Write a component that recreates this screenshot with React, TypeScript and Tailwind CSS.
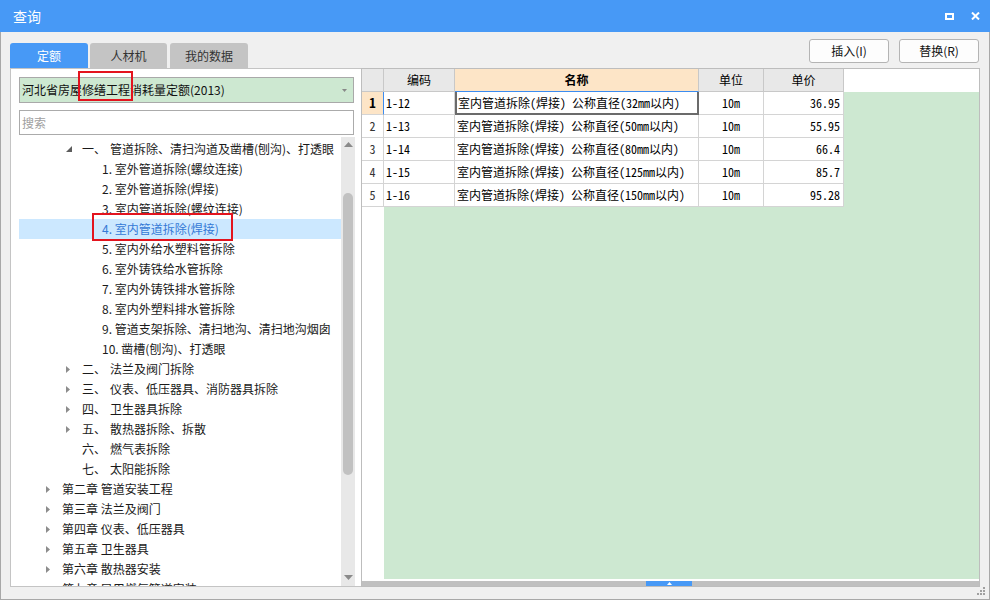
import React from "react";

type TreeRow = {
  kind: "chapter" | "section" | "item";
  arrow?: "right" | "down" | "none";
  num?: string;
  text: string;
  selected?: boolean;
};

const tree: TreeRow[] = [
  { kind: "section", arrow: "down", num: "一、", text: "管道拆除、清扫沟道及凿槽(刨沟)、打透眼" },
  { kind: "item", text: "1. 室外管道拆除(螺纹连接)" },
  { kind: "item", text: "2. 室外管道拆除(焊接)" },
  { kind: "item", text: "3. 室内管道拆除(螺纹连接)" },
  { kind: "item", text: "4. 室内管道拆除(焊接)", selected: true },
  { kind: "item", text: "5. 室内外给水塑料管拆除" },
  { kind: "item", text: "6. 室外铸铁给水管拆除" },
  { kind: "item", text: "7. 室内外铸铁排水管拆除" },
  { kind: "item", text: "8. 室内外塑料排水管拆除" },
  { kind: "item", text: "9. 管道支架拆除、清扫地沟、清扫地沟烟囱" },
  { kind: "item", text: "10. 凿槽(刨沟)、打透眼" },
  { kind: "section", arrow: "right", num: "二、", text: "法兰及阀门拆除" },
  { kind: "section", arrow: "right", num: "三、", text: "仪表、低压器具、消防器具拆除" },
  { kind: "section", arrow: "right", num: "四、", text: "卫生器具拆除" },
  { kind: "section", arrow: "right", num: "五、", text: "散热器拆除、拆散" },
  { kind: "section", arrow: "none", num: "六、", text: "燃气表拆除" },
  { kind: "section", arrow: "none", num: "七、", text: "太阳能拆除" },
  { kind: "chapter", arrow: "right", text: "第二章 管道安装工程" },
  { kind: "chapter", arrow: "right", text: "第三章 法兰及阀门" },
  { kind: "chapter", arrow: "right", text: "第四章 仪表、低压器具" },
  { kind: "chapter", arrow: "right", text: "第五章 卫生器具" },
  { kind: "chapter", arrow: "right", text: "第六章 散热器安装" },
  { kind: "chapter", arrow: "right", text: "第七章 民用燃气管道安装" },
];

const rows = [
  ["1-12", "室内管道拆除(焊接) 公称直径(32mm以内)", "10m", "36.95"],
  ["1-13", "室内管道拆除(焊接) 公称直径(50mm以内)", "10m", "55.95"],
  ["1-14", "室内管道拆除(焊接) 公称直径(80mm以内)", "10m", "66.4"],
  ["1-15", "室内管道拆除(焊接) 公称直径(125mm以内)", "10m", "85.7"],
  ["1-16", "室内管道拆除(焊接) 公称直径(150mm以内)", "10m", "95.28"],
];

function RightArrow() {
  return (
    <svg width="4" height="7" viewBox="0 0 4 7" className="shrink-0">
      <polygon points="0,0 4,3.5 0,7" fill="#8c8c8c" />
    </svg>
  );
}

function DownArrow() {
  return (
    <svg width="6" height="6" viewBox="0 0 6 6" className="shrink-0">
      <polygon points="6,0 6,6 0,6" fill="#5c5c5c" />
    </svg>
  );
}

function TreeLine({ r }: { r: TreeRow }) {
  const base = "h-[20px] flex items-center whitespace-nowrap text-[12px] leading-[20px]";
  const color = r.selected ? "bg-[#cce8ff] text-[#3479d6]" : "text-[#1a1a1a]";
  if (r.kind === "chapter") {
    return (
      <div className={`${base} ${color} pl-[27px]`}>
        <RightArrow />
        <span className="ml-[12px]">{r.text}</span>
      </div>
    );
  }
  if (r.kind === "section") {
    return (
      <div className={`${base} ${color} pl-[47px]`}>
        {r.arrow === "down" ? (
          <div className="w-[6px] flex items-center">
            <DownArrow />
          </div>
        ) : r.arrow === "right" ? (
          <div className="w-[6px] flex items-center">
            <RightArrow />
          </div>
        ) : (
          <div className="w-[6px]" />
        )}
        <span className="ml-[10px] w-[28px] shrink-0">{r.num}</span>
        <span>{r.text}</span>
      </div>
    );
  }
  return (
    <div className={`${base} ${color} pl-[83px]`}>
      <span>{r.text}</span>
    </div>
  );
}

export default function App() {
  const mono = "font-['Noto_Sans_Mono_CJK_SC','Noto_Sans_CJK_SC',monospace]";
  return (
    <div className="relative w-[990px] h-[600px] bg-[#f0f0f0] flex flex-col font-['Noto_Sans_CJK_SC','Noto_Sans',sans-serif] overflow-hidden">
      {/* Title bar */}
      <div className="h-[32px] bg-[#4799f6] flex items-center justify-between pl-[13px] pr-[10px] shrink-0">
        <span className="text-white text-[14px] leading-none">查询</span>
        <div className="flex items-center gap-[17px]">
          <div className="w-[9px] h-[7px] border-2 border-white" />
          <svg width="9" height="8" viewBox="0 0 9 8">
            <path d="M1 0.5 L8 7.5 M8 0.5 L1 7.5" stroke="white" strokeWidth="2" />
          </svg>
        </div>
      </div>

      {/* Body */}
      <div className="flex-1 flex flex-col border-x border-b border-[#a8a8a8] px-[9px]">
        {/* Tabs + buttons */}
        <div className="h-[36px] flex justify-between shrink-0">
          <div className="flex items-end text-[12px]">
            <div className="w-[78px] h-[25px] rounded-t-[3px] bg-[#4799f6] text-white flex items-center justify-center">定额</div>
            <div className="ml-[2px] w-[77px] h-[25px] rounded-t-[3px] bg-[#c4c4c4] text-[#333] flex items-center justify-center">人材机</div>
            <div className="ml-[3px] w-[78px] h-[25px] rounded-t-[3px] bg-[#c4c4c4] text-[#333] flex items-center justify-center">我的数据</div>
          </div>
          <div className="flex items-start pt-[7px] gap-[10px] pr-[1px] text-[12px]">
            <button className="w-[80px] h-[24px] bg-[#fdfdfd] border border-[#b4b4b4] rounded-[3px] text-[#111]">插入(I)</button>
            <button className="w-[80px] h-[24px] bg-[#fdfdfd] border border-[#b4b4b4] rounded-[3px] text-[#111]">替换(R)</button>
          </div>
        </div>

        {/* Main */}
        <div className="h-[519px] flex shrink-0">
          {/* Left panel */}
          <div className="w-[351px] h-full bg-white border-l border-y border-[#c4c4c4] flex flex-col">
            <div className="pl-[8px] pt-[8px]">
              <div className="w-[335px] h-[26px] bg-[#cde8d1] border border-[#a9a9a9] flex items-center justify-between pl-[2px] pr-[6px]">
                <span className="text-[12px] text-[#111]">河北省房屋修缮工程消耗量定额(2013)</span>
                <svg width="5" height="3" viewBox="0 0 5 3">
                  <polygon points="0,0 5,0 2.5,3" fill="#888" />
                </svg>
              </div>
              <div className="mt-[7px] w-[335px] h-[25px] bg-white border border-[#ababab] flex items-center pl-[2px]">
                <span className="text-[12px] text-[#a0a0a0]">搜索</span>
              </div>
            </div>
            <div className="mt-[2px] flex-1 min-h-0 flex pl-[8px]">
              <div className="w-[322px] overflow-hidden pt-[2px]">
                {tree.map((r, i) => (
                  <TreeLine key={i} r={r} />
                ))}
              </div>
              <div className="w-[14px] bg-[#e8e8e8] flex flex-col items-center">
                <div className="h-[14px] flex items-center justify-center">
                  <svg width="9" height="5" viewBox="0 0 9 5">
                    <polygon points="0,5 9,5 4.5,0" fill="#8a8a8a" />
                  </svg>
                </div>
                <div className="mt-[42px] w-[10px] h-[282px] rounded-full bg-[#c1c1c1]" />
                <div className="flex-1" />
                <div className="h-[14px] flex items-start pt-[3px] justify-center">
                  <svg width="9" height="5" viewBox="0 0 9 5">
                    <polygon points="0,0 9,0 4.5,5" fill="#8a8a8a" />
                  </svg>
                </div>
              </div>
            </div>
          </div>

          {/* Grid */}
          <div className={`w-[619px] h-full border border-[#bdbdbd] bg-white flex flex-col text-[12px] text-black`}>
            <div className="h-[23px] flex shrink-0">
              <div className="w-[22px] bg-[#e8e8e8] border-r border-b border-[#c8c8c8]" />
              <div className="w-[71px] bg-[#e8e8e8] border-r border-b border-[#c8c8c8] flex items-center justify-center">编码</div>
              <div className="w-[244px] bg-[#fde5c7] border-r border-[#c8c8c8] border-b border-b-[#3c8cf0] flex items-center justify-center font-bold">名称</div>
              <div className="w-[65px] bg-[#e8e8e8] border-r border-b border-[#c8c8c8] flex items-center justify-center">单位</div>
              <div className="w-[80px] bg-[#e8e8e8] border-r border-b border-[#c8c8c8] flex items-center justify-center">单价</div>
              <div className="flex-1 bg-white" />
            </div>
            <div className="flex-1 flex min-h-0">
              <div className="w-[482px] flex flex-col">
                {rows.map((r, i) => (
                  <div key={i} className={`h-[23px] flex shrink-0 ${mono}`}>
                    <div
                      className={
                        i === 0
                          ? "w-[22px] bg-[#fde5c7] border-b border-[#d4d4d4] border-r border-r-[#3c8cf0] flex items-center justify-center font-bold text-[13px]"
                          : "w-[22px] bg-white border-r border-b border-[#d4d4d4] flex items-center justify-center text-[#333]"
                      }
                    >
                      {i + 1}
                    </div>
                    <div className="w-[71px] border-r border-b border-[#d4d4d4] flex items-center pl-[2px] whitespace-nowrap">{r[0]}</div>
                    <div
                      className={
                        i === 0
                          ? "w-[244px] border-2 border-t-0 border-[#6b6b6b] flex items-center pl-[1px] whitespace-nowrap overflow-hidden"
                          : "w-[244px] border-r border-b border-[#d4d4d4] flex items-center pl-[2px] whitespace-nowrap overflow-hidden"
                      }
                    >
                      {r[1]}
                    </div>
                    <div className="w-[65px] border-r border-b border-[#d4d4d4] flex items-center justify-center">{r[2]}</div>
                    <div className="w-[80px] border-r border-b border-[#d4d4d4] flex items-center justify-end pr-[3px]">{r[3]}</div>
                  </div>
                ))}
                <div className="flex-1 flex pb-[2px]">
                  <div className="w-[22px]" />
                  <div className="flex-1 bg-[#cde8d1]" />
                </div>
              </div>
              <div className="flex-1 flex flex-col pb-[2px]">
                <div className="flex-1 bg-[#cde8d1]" />
              </div>
            </div>
            <div className="h-[5px] bg-[#c0c0c0] flex shrink-0">
              <div className="ml-[284px] w-[46px] h-full bg-[#4799f6] flex items-center justify-center">
                <svg width="5" height="3" viewBox="0 0 5 3">
                  <polygon points="0,3 5,3 2.5,0" fill="white" />
                </svg>
              </div>
            </div>
          </div>
        </div>

        {/* Bottom gap with grip */}
        <div className="flex-1 flex justify-end items-start pr-0">
          <svg width="9" height="9" viewBox="0 0 9 9" className="mr-[-6px]">
            <rect x="6" y="0" width="2" height="2" fill="#a0a0a0" />
            <rect x="3" y="3" width="2" height="2" fill="#a0a0a0" />
            <rect x="6" y="3" width="2" height="2" fill="#a0a0a0" />
            <rect x="0" y="6" width="2" height="2" fill="#a0a0a0" />
            <rect x="3" y="6" width="2" height="2" fill="#a0a0a0" />
            <rect x="6" y="6" width="2" height="2" fill="#a0a0a0" />
          </svg>
        </div>
      </div>

      {/* Red annotation boxes */}
      <div className="absolute left-[78px] top-[71px] w-[55px] h-[30px] border-2 border-[#e3141e]" />
      <div className="absolute left-[92px] top-[213px] w-[141px] h-[28px] border-2 border-[#e3141e]" />
    </div>
  );
}
